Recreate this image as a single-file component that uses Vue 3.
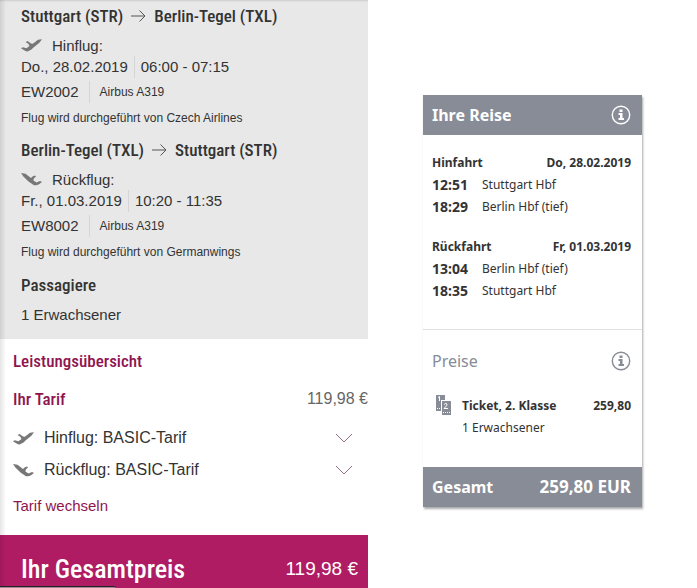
<script setup>
const flights = [
  {
    from: 'Stuttgart (STR)',
    to: 'Berlin-Tegel (TXL)',
    label: 'Hinflug:',
    outbound: true,
    date: 'Do., 28.02.2019',
    time: '06:00 - 07:15',
    number: 'EW2002',
    plane: 'Airbus A319',
    carrier: 'Flug wird durchgeführt von Czech Airlines'
  },
  {
    from: 'Berlin-Tegel (TXL)',
    to: 'Stuttgart (STR)',
    label: 'Rückflug:',
    outbound: false,
    date: 'Fr., 01.03.2019',
    time: '10:20 - 11:35',
    number: 'EW8002',
    plane: 'Airbus A319',
    carrier: 'Flug wird durchgeführt von Germanwings'
  }
]

const fares = [
  { label: 'Hinflug: BASIC-Tarif', outbound: true },
  { label: 'Rückflug: BASIC-Tarif', outbound: false }
]

const trips = [
  {
    label: 'Hinfahrt',
    date: 'Do, 28.02.2019',
    stops: [
      { time: '12:51', place: 'Stuttgart Hbf' },
      { time: '18:29', place: 'Berlin Hbf (tief)' }
    ]
  },
  {
    label: 'Rückfahrt',
    date: 'Fr, 01.03.2019',
    stops: [
      { time: '13:04', place: 'Berlin Hbf (tief)' },
      { time: '18:35', place: 'Stuttgart Hbf' }
    ]
  }
]

const planeOut = 'M21 .3L17 .8L11.800 4.800L10 4.600L6.600 2L4.600 3L7.300 4.800L8.500 7L5.400 9.200L1.800 8.200L0 9.200L3.600 11.600Q5.200 12.800 7 12.200L10.500 10.600L12.500 8.400L18.400 3.800Z'
const planeBack = 'M0 0L4.500 .8L10 5L11.500 3.600L14 2.600L15 3.600L12.800 5.400L12.400 7.600L15.500 9.400L19 8L21 9L18 11.200Q15.500 12.800 13 12.200L7.500 8.400L2.400 3.600Z'
</script>

<template>
  <main class="page">
    <section class="flight">
      <div class="itinerary">
        <article v-for="f in flights" :key="f.number" class="leg">
          <h2 class="route">
            {{ f.from }}
            <svg class="arrow" viewBox="0 0 15 12" aria-hidden="true"><path d="M0 6H14M8.500 .500L14 6L8.500 11.500" /></svg>
            {{ f.to }}
          </h2>
          <p class="direction">
            <svg class="plane" viewBox="0 0 21 13" aria-hidden="true"><path :d="f.outbound ? planeOut : planeBack" /></svg>
            {{ f.label }}
          </p>
          <p class="facts when"><span>{{ f.date }}</span><span>{{ f.time }}</span></p>
          <p class="facts number"><span>{{ f.number }}</span><span class="small">{{ f.plane }}</span></p>
          <p class="carrier">{{ f.carrier }}</p>
        </article>
        <h2 class="route">Passagiere</h2>
        <p class="passengers">1 Erwachsener</p>
      </div>

      <div class="services">
        <h2 class="heading">Leistungsübersicht</h2>
        <div class="tariff">
          <h3 class="heading">Ihr Tarif</h3>
          <span>119,98 €</span>
        </div>
        <button v-for="fare in fares" :key="fare.label" class="fare" type="button">
          <svg class="plane" viewBox="0 0 21 13" aria-hidden="true"><path :d="fare.outbound ? planeOut : planeBack" /></svg>
          <span>{{ fare.label }}</span>
          <svg class="chevron" viewBox="0 0 18 10" aria-hidden="true"><path d="M1 1L9 9L17 1" /></svg>
        </button>
        <a class="change" href="#">Tarif wechseln</a>
      </div>

      <div class="total">
        <h2>Ihr Gesamtpreis</h2>
        <span>119,98 €</span>
      </div>
      <div class="status"></div>
    </section>

    <section class="rail">
      <div class="card">
        <header class="bar">
          <h2>Ihre Reise</h2>
          <button class="info" type="button" aria-label="Info">
            <svg viewBox="0 0 20 20" aria-hidden="true"><circle cx="10" cy="10" r="8.700" /><path d="M8.500 4.500h3v2.500h-3zM7.500 8h4v5h1.500v2h-5.500v-2h1.500v-3h-1.500z" /></svg>
          </button>
        </header>
        <div class="trips">
          <article v-for="t in trips" :key="t.label">
            <div class="line strong"><span>{{ t.label }}</span><span>{{ t.date }}</span></div>
            <div v-for="s in t.stops" :key="s.time" class="stop">
              <time>{{ s.time }}</time><span>{{ s.place }}</span>
            </div>
          </article>
        </div>
        <div class="prices">
          <div class="prices-head">
            <h3>Preise</h3>
            <button class="info" type="button" aria-label="Info">
              <svg viewBox="0 0 20 20" aria-hidden="true"><circle cx="10" cy="10" r="8.700" /><path d="M8.500 4.500h3v2.500h-3zM7.500 8h4v5h1.500v2h-5.500v-2h1.500v-3h-1.500z" /></svg>
            </button>
          </div>
          <div class="ticket">
            <svg class="ticket-icon" viewBox="0 0 15 20" aria-hidden="true">
              <path class="stub" d="M0 0H9V5H5V16H0ZM6 6H15V20H6Z" />
              <path class="mark" d="M2 2.500L3.500 1.500V6M8 9.500Q9.500 7.500 11 9Q11.500 10.500 8 13.500H12" />
              <path class="dots" d="M1 13.500H5M7 17.500H14" />
            </svg>
            <div class="ticket-text">
              <div class="line strong"><span>Ticket, 2. Klasse</span><span>259,80</span></div>
              <div class="line">1 Erwachsener</div>
            </div>
          </div>
        </div>
        <footer class="bar"><span class="sum-label">Gesamt</span><span>259,80 EUR</span></footer>
      </div>
    </section>
  </main>
</template>

<style>
body {
  margin: 0;
  background: #fff;
}
</style>

<style scoped>
.page {
  --condensed: "Roboto Condensed", "Liberation Sans Narrow", Roboto, sans-serif;
  display: grid;
  grid-template-columns: minmax(0, 368fr) minmax(0, 329fr);
  min-height: 100vh;
  color: #333;
}

h2, h3, p {
  margin: 0;
}

button {
  padding: 0;
  border: 0;
  background: none;
  color: inherit;
  font: inherit;
  text-align: left;
}

svg {
  display: block;
  flex: none;
}

.flight {
  position: relative;
  display: flex;
  flex-direction: column;
  font-family: "Liberation Sans", Arial, sans-serif;
  font-size: 15px;
  line-height: 22px;
}

.flight::before {
  content: "";
  position: absolute;
  inset: 0 auto 0 0;
  width: 6px;
  background: linear-gradient(to right, rgb(0 0 0 / 10%), transparent);
}

.itinerary {
  padding: 4px 21px 13px;
  background: #e8e8e8;
  box-shadow: inset 0 2px 2px -1px #ccc;
}

.leg {
  margin-bottom: 9px;
}

.leg + .leg {
  margin-bottom: 10px;
}

.route {
  display: flex;
  align-items: center;
  gap: 8px;
  font: 500 17px/24px var(--condensed);
}

.arrow {
  width: 15px;
  height: 12px;
  fill: none;
  stroke: #555;
  stroke-width: 1;
}

.plane {
  width: 21px;
  height: 13px;
  fill: #777;
}

.direction {
  display: flex;
  align-items: center;
  gap: 10px;
  margin-top: 7px;
  line-height: 21px;
}

.facts {
  display: flex;
  align-items: center;
}

.facts span + span {
  border-left: 1px solid #d5d5d5;
}

.when span + span {
  margin-left: 6px;
  padding-left: 6px;
}

.number {
  margin-top: 3px;
}

.number span + span {
  margin-left: 10px;
  padding-left: 10px;
}

.small,
.carrier {
  font-size: 12px;
}

.carrier {
  margin-top: 4px;
}

.passengers {
  margin-top: 7px;
}

.services {
  display: flex;
  flex-direction: column;
  padding: 10px 0 18px 13px;
}

.heading {
  color: #8f1550;
  font: 500 17px/24px var(--condensed);
}

.tariff {
  display: flex;
  justify-content: space-between;
  align-items: center;
  margin: 14px 0 11px;
  color: #666;
  font-size: 16px;
}

.fare {
  display: flex;
  align-items: center;
  gap: 10px;
  height: 32px;
  padding-right: 15px;
  font-size: 16px;
}

.chevron {
  width: 18px;
  height: 10px;
  margin-left: auto;
  fill: none;
  stroke: #93708a;
  stroke-width: 1;
}

.change {
  align-self: flex-start;
  margin-top: 9px;
  color: #8f1550;
  text-decoration: none;
}

.total {
  display: flex;
  flex: 1 0 auto;
  justify-content: space-between;
  align-items: center;
  padding: 14px 10px 0 21px;
  background: #b01c64;
  color: #fff;
  font-size: 19px;
}

.total h2 {
  font: 500 26px/32px var(--condensed);
}

.status {
  position: absolute;
  bottom: 0;
  left: 0;
  width: 116px;
  height: 1px;
  border-top: 1px solid #222;
  border-radius: 0 2px 0 0;
  background: #a8859a;
}

.rail {
  padding: 95px 55px 0;
  font-family: "Noto Sans", "Open Sans", sans-serif;
  font-size: 12px;
  line-height: 22px;
}

.card {
  box-shadow: 1px 2px 2px #aaa;
}

.bar {
  display: flex;
  justify-content: space-between;
  align-items: center;
  height: 40px;
  padding: 0 11px 0 9px;
  background: #878c96;
  color: #fff;
  font-size: 17px;
  font-weight: bold;
}

.bar h2,
.sum-label {
  font-size: 16px;
}

.info svg {
  width: 20px;
  height: 20px;
  fill: currentColor;
}

.info circle {
  fill: none;
  stroke: currentColor;
  stroke-width: 1.400;
}

.trips {
  display: grid;
  gap: 18px;
  padding: 17px 11px 27px 9px;
  border-bottom: 1px solid #e0e0e2;
}

.line {
  display: flex;
  justify-content: space-between;
}

.strong {
  font-weight: bold;
}

.stop {
  display: flex;
  align-items: center;
  height: 22px;
}

.stop time {
  width: 50px;
  font-size: 14px;
  font-weight: bold;
}

.prices {
  padding: 20px 11px 28px 9px;
}

.prices-head {
  display: flex;
  justify-content: space-between;
  align-items: center;
  color: #878c96;
}

.prices-head h3 {
  font-size: 16px;
  font-weight: normal;
}

.ticket {
  display: flex;
  margin-top: 23px;
}

.ticket-icon {
  width: 15px;
  height: 20px;
  margin: 0 11px 0 4px;
}

.stub {
  fill: #878c96;
}

.mark,
.dots {
  fill: none;
  stroke: #fff;
  stroke-width: 1;
}

.dots {
  stroke-dasharray: 1 1;
}

.ticket-text {
  flex: 1;
}
</style>
